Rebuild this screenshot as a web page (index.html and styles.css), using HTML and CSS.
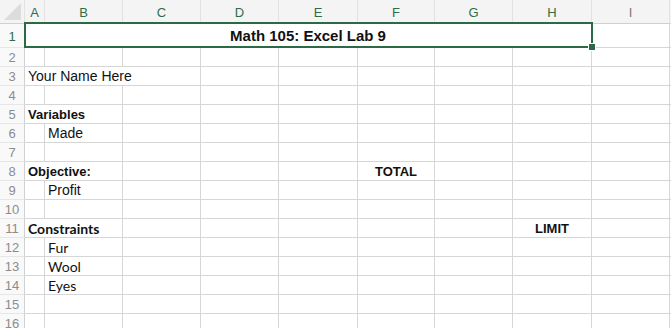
FILE: index.html
```html
<!DOCTYPE html>
<html>
<head>
    <title>Math 105: Excel Lab 9</title>
    <link rel="stylesheet" href="styles.css">
</head>
<body>
    <table class="sheet">
        <colgroup>
            <col style="width: 25px">
            <col style="width: 20px">
            <col style="width: 78px">
            <col style="width: 78px">
            <col style="width: 78px">
            <col style="width: 79px">
            <col style="width: 77px">
            <col style="width: 78px">
            <col style="width: 79px">
            <col style="width: 78px">
            <col style="width: 20px">
        </colgroup>
        <thead>
            <tr class="col-head">
                <th class="corner"><span class="corner-tri"></span></th>
                <th class="sel">A</th>
                <th class="sel">B</th>
                <th class="sel">C</th>
                <th class="sel">D</th>
                <th class="sel">E</th>
                <th class="sel">F</th>
                <th class="sel">G</th>
                <th class="sel">H</th>
                <th>I</th>
                <th></th>
            </tr>
        </thead>
        <tbody>
            <tr class="row-first">
                <th class="sel">1</th>
                <td colspan="8" class="title">
                    Math 105: Excel Lab 9
                    <div class="selection"><span class="handle"></span></div>
                </td>
                <td></td><td></td>
            </tr>
            <tr>
                <th>2</th>
                <td></td><td></td><td></td><td></td><td></td><td></td><td></td><td></td><td></td><td></td>
            </tr>
            <tr>
                <th>3</th>
                <td colspan="3" class="txt">Your Name Here</td>
                <td></td><td></td><td></td><td></td><td></td><td></td><td></td>
            </tr>
            <tr>
                <th>4</th>
                <td></td><td></td><td></td><td></td><td></td><td></td><td></td><td></td><td></td><td></td>
            </tr>
            <tr>
                <th>5</th>
                <td colspan="2" class="txt bold">Variables</td>
                <td></td><td></td><td></td><td></td><td></td><td></td><td></td><td></td>
            </tr>
            <tr>
                <th>6</th>
                <td></td><td class="txt">Made</td><td></td><td></td><td></td><td></td><td></td><td></td><td></td><td></td>
            </tr>
            <tr>
                <th>7</th>
                <td></td><td></td><td></td><td></td><td></td><td></td><td></td><td></td><td></td><td></td>
            </tr>
            <tr>
                <th>8</th>
                <td colspan="2" class="txt bold">Objective:</td>
                <td></td><td></td><td></td><td class="center">TOTAL</td><td></td><td></td><td></td><td></td>
            </tr>
            <tr>
                <th>9</th>
                <td></td><td class="txt">Profit</td><td></td><td></td><td></td><td></td><td></td><td></td><td></td><td></td>
            </tr>
            <tr>
                <th>10</th>
                <td></td><td></td><td></td><td></td><td></td><td></td><td></td><td></td><td></td><td></td>
            </tr>
            <tr>
                <th>11</th>
                <td colspan="2" class="txt bold cal">Constraints</td>
                <td></td><td></td><td></td><td></td><td></td><td class="center">LIMIT</td><td></td><td></td>
            </tr>
            <tr>
                <th>12</th>
                <td></td><td class="txt cal">Fur</td><td></td><td></td><td></td><td></td><td></td><td></td><td></td><td></td>
            </tr>
            <tr>
                <th>13</th>
                <td></td><td class="txt cal">Wool</td><td></td><td></td><td></td><td></td><td></td><td></td><td></td><td></td>
            </tr>
            <tr>
                <th>14</th>
                <td></td><td class="txt cal">Eyes</td><td></td><td></td><td></td><td></td><td></td><td></td><td></td><td></td>
            </tr>
            <tr>
                <th>15</th>
                <td></td><td></td><td></td><td></td><td></td><td></td><td></td><td></td><td></td><td></td>
            </tr>
            <tr>
                <th>16</th>
                <td></td><td></td><td></td><td></td><td></td><td></td><td></td><td></td><td></td><td></td>
            </tr>
        </tbody>
    </table>
</body>
</html>
```

FILE: styles.css
```css
body {
    margin: 0;
    overflow: hidden;
    background: #fff;
    font-family: "Liberation Sans", Arial, sans-serif;
}
.sheet {
    table-layout: fixed;
    width: 690px;
    border-collapse: separate;
    border-spacing: 0;
}
.sheet th, .sheet td {
    box-sizing: border-box;
    padding: 0;
    border-right: 1px solid #d6d6d6;
    border-bottom: 1px solid #d6d6d6;
    height: 19px;
    font-size: 14px;
    white-space: nowrap;
    overflow: hidden;
    vertical-align: middle;
}
.sheet .col-head th {
    height: 24px;
    background: #f4f4f4;
    color: #7a7a7a;
    font-weight: normal;
    font-size: 13px;
    border-right-color: #e2e2e2;
    border-bottom-color: #cfcfcf;
    padding-top: 1px;
}
.sheet .col-head th.sel {
    color: #2d6e48;
}
.corner {
    position: relative;
}
.corner-tri {
    position: absolute;
    right: 3px;
    bottom: 3px;
    width: 0;
    height: 0;
    border-left: 17px solid transparent;
    border-bottom: 17px solid #dcdcdc;
}
.sheet tbody th {
    background: #f9f9f9;
    color: #8c8c8c;
    font-weight: normal;
    font-size: 13px;
    text-align: center;
    border-bottom-color: #e6e6e6;
    border-right-color: #d0d0d0;
    padding-top: 1px;
}
.sheet tbody th.sel {
    color: #2d6e48;
}
.sheet .row-first th, .sheet .row-first td {
    height: 24px;
}
.sheet .title {
    position: relative;
    text-align: center;
    font-weight: bold;
    font-size: 15px;
    color: #111;
    overflow: visible;
}
.selection {
    position: absolute;
    left: -1px;
    top: -2px;
    right: -2px;
    bottom: -1px;
    border: 2px solid #2b6a44;
}
.handle {
    position: absolute;
    right: -5px;
    bottom: -5px;
    width: 6px;
    height: 6px;
    background: #2b6a44;
    border: 1px solid #fff;
}
.sheet .txt {
    padding-left: 3px;
    color: #111;
}
.sheet .bold {
    font-weight: bold;
    font-size: 13px;
}
.sheet .cal {
    font-family: Lato, "Liberation Sans", sans-serif;
    font-size: 14px;
}
.sheet .center {
    text-align: center;
    font-weight: bold;
    font-size: 13px;
    color: #111;
}
```
